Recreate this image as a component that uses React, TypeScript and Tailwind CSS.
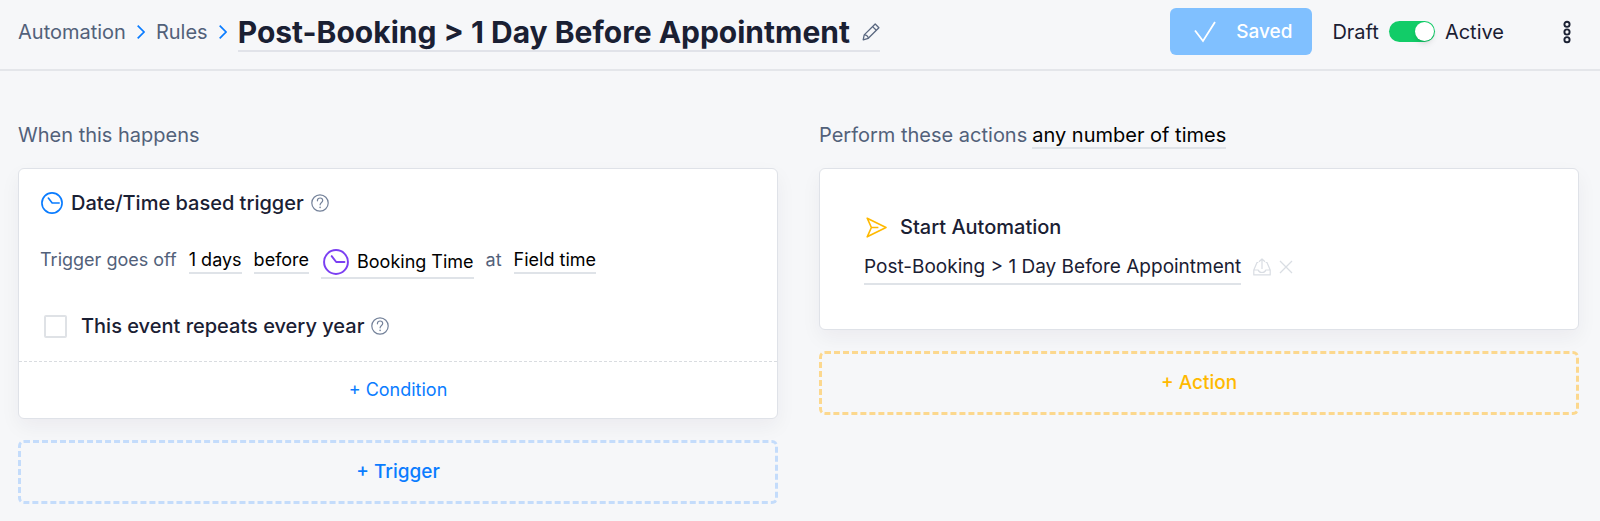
import { useState } from "react";
import type { ReactNode } from "react";

interface ClockIconProps {
  className: string;
}

function ClockIcon({ className }: ClockIconProps) {
  return (
    <svg viewBox="0 0 24 24" fill="none" stroke="currentColor" strokeWidth="1.8" className={className}>
      <circle cx="12" cy="12" r="11" />
      <path d="M8 6.6l4.2 5.4h7.6" strokeLinecap="round" strokeLinejoin="round" />
    </svg>
  );
}

function HelpIcon() {
  return (
    <svg viewBox="0 0 18 18" fill="none" stroke="currentColor" strokeWidth="1.2" className="size-[18px] text-[#74829a]">
      <circle cx="9" cy="9" r="8.2" />
      <path d="M6.4 6.8c0-1.7 1.1-2.8 2.7-2.8s2.6 1 2.6 2.4c0 2-2.6 2.1-2.6 4.4" strokeLinecap="round" />
      <circle cx="9.1" cy="13.4" r=".8" fill="currentColor" stroke="none" />
    </svg>
  );
}

function Chevron() {
  return (
    <svg viewBox="0 0 8 14" fill="none" stroke="currentColor" strokeWidth="1.7" className="mx-[11px] h-[14px] w-2 text-[#0a7cff]">
      <path d="M.7.7L7 7 .7 13.3" />
    </svg>
  );
}

function PencilIcon() {
  return (
    <svg viewBox="0 0 18 18" fill="none" stroke="currentColor" strokeWidth="1.3" strokeLinejoin="round" className="size-[18px] text-[#5a6880]">
      <path d="M13.2 1l3.7 3.7L6.3 15.3 1.2 16.9l1-5z" />
      <path d="M10.6 3.6l3.7 3.7M2.2 11.9c1.9-.2 4.1 1.5 4.1 3.4" />
    </svg>
  );
}

function SendIcon() {
  return (
    <svg viewBox="0 0 21 21" fill="none" stroke="currentColor" strokeWidth="1.6" strokeLinejoin="round" className="size-[21px] text-[#ffb900]">
      <path d="M1.2 1.2L20 10.5 1.2 19.8l4.2-9.3zM5.4 10.5h7" />
    </svg>
  );
}

function OutboxIcon() {
  return (
    <svg viewBox="0 0 18 18" fill="none" stroke="currentColor" strokeWidth="1.2" strokeLinejoin="round" className="size-[18px]">
      <path d="M5.3 4.5H4L.8 12v4.9h16.4V12L14 4.5h-1.3M.8 12h4.4c.5 1.7 1.9 2.5 3.8 2.5s3.3-.8 3.8-2.5h4.4" />
      <path d="M9 11V1M6 3.8L9 .9l3 2.9" />
    </svg>
  );
}

function CloseIcon() {
  return (
    <svg viewBox="0 0 14 14" fill="none" stroke="currentColor" strokeWidth="1.3" className="size-[14px]">
      <path d="M1 1l12 12M13 1L1 13" />
    </svg>
  );
}

function Token({ children }: { children: ReactNode }) {
  return (
    <button type="button" className="border-b-2 border-[#dfe3e8] text-black">
      {children}
    </button>
  );
}

export default function App() {
  const [active, setActive] = useState(true);
  const [repeats, setRepeats] = useState(false);

  return (
    <div className="min-h-screen bg-[#f6f7f9] font-['Inter',sans-serif] text-xl leading-6 text-[#1a2033]">
      {/* Header */}
      <header className="flex items-center justify-between border-b-2 border-[#e4e6ea] pt-2 pr-7 pb-[14px] pl-[18px]">
        <nav className="flex items-center text-[#52617a]">
          <a href="#automation">Automation</a>
          <Chevron />
          <a href="#rules">Rules</a>
          <Chevron />
          <div className="flex items-center gap-3 border-b-2 border-[#e1e3e9] pt-0.5">
            <h1 className="text-3xl leading-9 font-[650] text-[#1a2033]">
              Post-Booking &gt; 1 Day Before Appointment
            </h1>
            <button type="button" aria-label="Rename">
              <PencilIcon />
            </button>
          </div>
        </nav>

        <div className="flex items-center">
          <button type="button" className="flex h-[47px] items-center gap-5 rounded-md bg-[#80c0ff] pr-5 pl-6 text-[19px] font-medium text-white">
            <svg viewBox="0 0 22 22" fill="none" stroke="currentColor" strokeWidth="1.8" className="size-[22px]">
              <path d="M1 9.5l8 10.5L21 1" />
            </svg>
            Saved
          </button>
          <label className="ml-5 flex items-center gap-[10px]">
            Draft
            <input
              type="checkbox"
              role="switch"
              checked={active}
              onChange={(e) => setActive(e.target.checked)}
              className="flex h-[21px] w-[46px] appearance-none items-center rounded-full bg-[#b8c0cc] px-px before:size-[19px] before:rounded-full before:bg-white before:shadow-md checked:justify-end checked:bg-[#12cc68]"
            />
            Active
          </label>
          <button type="button" aria-label="More" className="ml-[58px]">
            <svg viewBox="0 0 10 24" fill="none" stroke="currentColor" strokeWidth="1.9" className="h-6 w-[10px]">
              <circle cx="5" cy="4.3" r="2.6" />
              <circle cx="5" cy="12" r="2.6" />
              <circle cx="5" cy="19.7" r="2.6" />
            </svg>
          </button>
        </div>
      </header>

      <main className="grid grid-cols-2 items-start gap-[41px] pt-[52px] pr-[21px] pb-4 pl-[18px]">
        {/* Triggers */}
        <section>
          <h2 className="text-[#52617a]">When this happens</h2>
          <div className="mt-[21px] rounded-md border border-[#dfe2e8] bg-white shadow-[0_8px_20px_rgba(30,20,60,0.05)]">
            <div className="px-[21px] pt-[22px] pb-[23px]">
              <div className="flex items-center gap-[7px] pl-px font-medium">
                <ClockIcon className="mr-px size-[22px] text-[#0a7cff]" />
                Date/Time based trigger
                <HelpIcon />
              </div>
              <div className="mt-[33px] flex items-start gap-3 text-lg leading-6 text-[#52617a]">
                <span>Trigger goes off</span>
                <Token>1 days</Token>
                <Token>before</Token>
                <button type="button" className="flex items-center gap-2 border-b-2 border-[#dfe3e8] pt-px pb-0.5 pl-0.5 text-black">
                  <ClockIcon className="size-[26px] text-[#7b3ff2]" />
                  Booking Time
                </button>
                <span>at</span>
                <Token>Field time</Token>
              </div>
              <div className="mt-[35px] flex items-center gap-[7px] font-medium">
                <label className="flex items-center gap-[14px]">
                  <input
                    type="checkbox"
                    checked={repeats}
                    onChange={(e) => setRepeats(e.target.checked)}
                    className="ml-1 size-[23px] appearance-none rounded-xs border-2 border-[#dfe2e6] bg-white checked:bg-[#0a7cff]"
                  />
                  This event repeats every year
                </label>
                <HelpIcon />
              </div>
            </div>
            <button type="button" className="w-full border-t border-dashed border-[#d9dce0] py-4 text-lg leading-6 text-[#0a7cff]">
              + Condition
            </button>
          </div>
          <button type="button" className="mt-[21px] h-16 w-full rounded-md border-3 border-dashed border-[#c4dcfb] text-[19px] font-medium text-[#0a7cff]">
            + Trigger
          </button>
        </section>

        {/* Actions */}
        <section>
          <h2 className="flex gap-[5px] text-[#52617a]">
            Perform these actions
            <Token>any number of times</Token>
          </h2>
          <div className="mt-[19px] rounded-md border border-[#dfe2e8] bg-white px-11 pt-[46px] pb-[44px] shadow-[0_8px_20px_rgba(30,20,60,0.05)]">
            <div className="flex items-center gap-[13px] pl-0.5 font-medium">
              <SendIcon />
              Start Automation
            </div>
            <div className="mt-4 flex items-start gap-3 text-[19px]">
              <button type="button" className="border-b-2 border-[#dfe3e8] pb-1">
                Post-Booking &gt; 1 Day Before Appointment
              </button>
              <div className="flex h-6 items-center gap-2 text-[#d9dde3]">
                <button type="button" aria-label="Open automation">
                  <OutboxIcon />
                </button>
                <button type="button" aria-label="Remove">
                  <CloseIcon />
                </button>
              </div>
            </div>
          </div>
          <button type="button" className="mt-[21px] h-16 w-full rounded-md border-3 border-dashed border-[#fcd88e] text-[19px] font-medium text-[#ffb900]">
            + Action
          </button>
        </section>
      </main>
    </div>
  );
}
